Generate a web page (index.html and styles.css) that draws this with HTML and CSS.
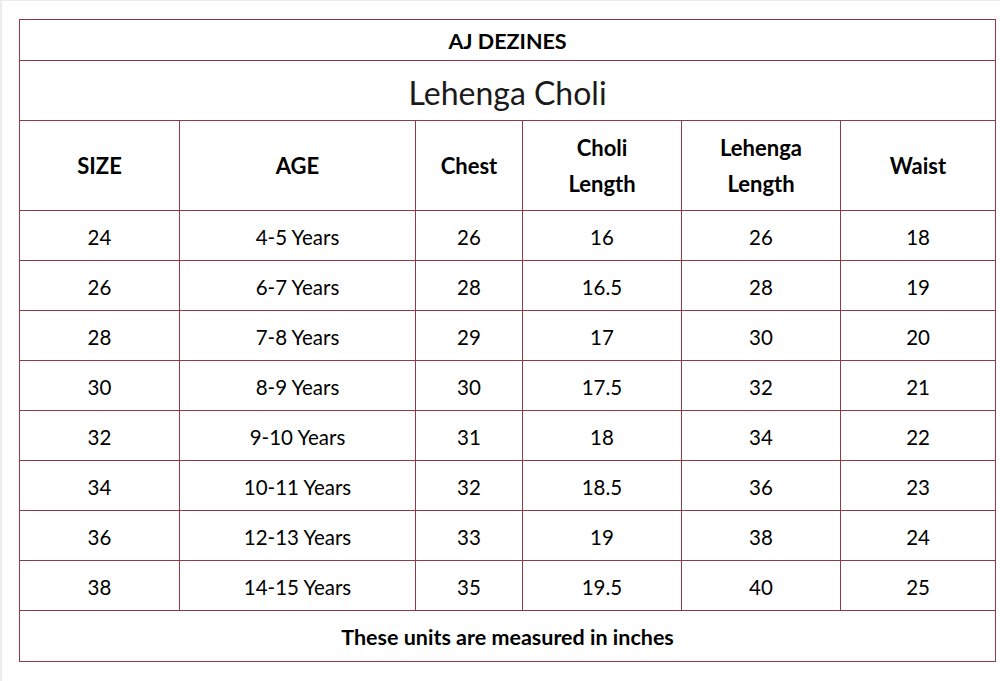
FILE: index.html
```html
<!DOCTYPE html>
<html lang="en">
<head>
<meta charset="utf-8">
<title>AJ DEZINES - Lehenga Choli Size Chart</title>
<link rel="stylesheet" href="styles.css">
</head>
<body>
<div class="page">
  <table class="chart">
    <colgroup>
      <col class="c1"><col class="c2"><col class="c3"><col class="c4"><col class="c5"><col class="c6">
    </colgroup>
    <tr class="brand"><td colspan="6">AJ DEZINES</td></tr>
    <tr class="title"><td colspan="6">Lehenga Choli</td></tr>
    <tr class="head">
      <th>SIZE</th><th>AGE</th><th>Chest</th><th>Choli<br>Length</th><th>Lehenga<br>Length</th><th>Waist</th>
    </tr>
    <tr class="row"><td>24</td><td>4-5 Years</td><td>26</td><td>16</td><td>26</td><td>18</td></tr>
    <tr class="row"><td>26</td><td>6-7 Years</td><td>28</td><td>16.5</td><td>28</td><td>19</td></tr>
    <tr class="row"><td>28</td><td>7-8 Years</td><td>29</td><td>17</td><td>30</td><td>20</td></tr>
    <tr class="row"><td>30</td><td>8-9 Years</td><td>30</td><td>17.5</td><td>32</td><td>21</td></tr>
    <tr class="row"><td>32</td><td>9-10 Years</td><td>31</td><td>18</td><td>34</td><td>22</td></tr>
    <tr class="row"><td>34</td><td>10-11 Years</td><td>32</td><td>18.5</td><td>36</td><td>23</td></tr>
    <tr class="row"><td>36</td><td>12-13 Years</td><td>33</td><td>19</td><td>38</td><td>24</td></tr>
    <tr class="row"><td>38</td><td>14-15 Years</td><td>35</td><td>19.5</td><td>40</td><td>25</td></tr>
    <tr class="foot"><td colspan="6">These units are measured in inches</td></tr>
  </table>
</div>
</body>
</html>
```
FILE: styles.css
```css
html, body {
  margin: 0;
  padding: 0;
  background: #ffffff;
}
.page {
  width: 1000px;
  height: 681px;
  box-sizing: border-box;
  padding: 18px 0 0 17px;
  border-left: 2px solid #ececec;
  border-top: 1px solid #ececec;
  font-family: Lato, "Open Sans", "Liberation Sans", sans-serif;
  color: #000000;
}
.chart {
  border-collapse: collapse;
  table-layout: fixed;
  width: 976px;
}
.chart td, .chart th {
  border: 1px solid #8b3c47;
  padding: 0;
  text-align: center;
  vertical-align: middle;
}
.c1 { width: 160px; }
.c2 { width: 236px; }
.c3 { width: 107px; }
.c4 { width: 159px; }
.c5 { width: 159px; }
.c6 { width: 155px; }
.brand { height: 41px; }
.brand td {
  font-weight: 700;
  font-size: 21.5px;
  padding-top: 1px;
}
.title { height: 60px; }
.title td {
  font-size: 32px;
  font-weight: 400;
  color: #1a1a1a;
  padding-top: 3px;
}
.head { height: 90px; }
.head th {
  font-weight: 700;
  font-size: 22px;
  line-height: 36px;
  padding-top: 1px;
}
.row { height: 50px; }
.row td {
  font-size: 20.5px;
  padding-top: 3px;
}
.foot { height: 51px; }
.foot td {
  font-size: 21.5px;
  font-weight: 700;
  padding-top: 2px;
}
```
